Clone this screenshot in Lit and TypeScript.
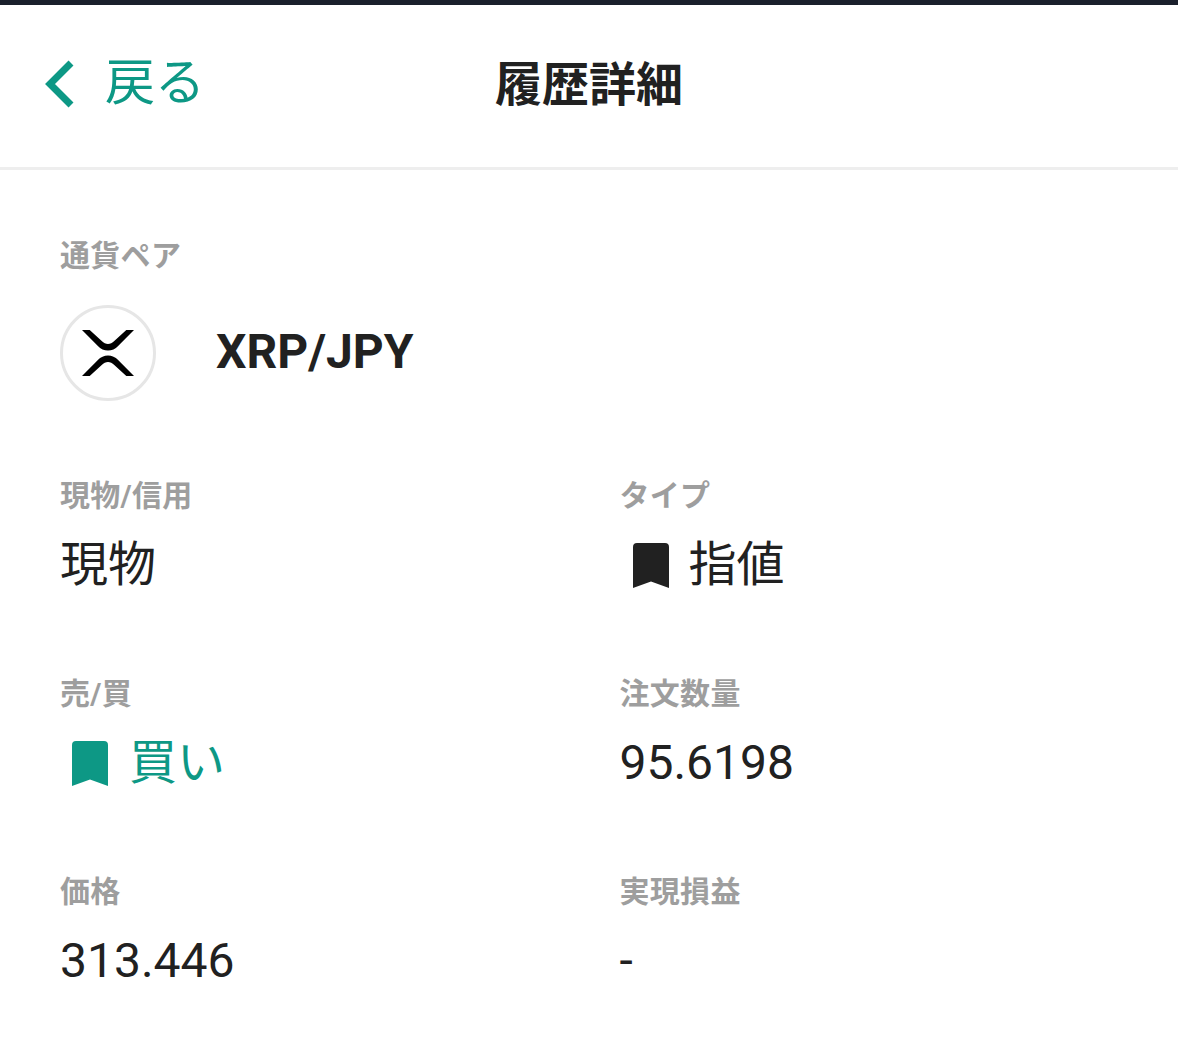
import { css, html, LitElement } from 'lit';
import { customElement } from 'lit/decorators.js';

const bookmark = (cls: string) => html`
  <svg class="mark ${cls}" viewBox="0 0 36 45" aria-hidden="true">
    <path d="M0 45V4a4 4 0 0 1 4-4h28a4 4 0 0 1 4 4v41l-18-6.500z" fill="currentColor"></path>
  </svg>
`;

@customElement('app-root')
export class AppRoot extends LitElement {
  static override styles = css`
    :host {
      display: block;
      min-height: 1063px;
      background: #fff;
      color: #212121;
      font-family: Roboto, 'Noto Sans CJK JP', sans-serif;
      border-top: 5px solid #1a202c;
      box-sizing: border-box;
    }
    .header {
      display: grid;
      grid-template-columns: 1fr auto 1fr;
      align-items: center;
      height: 165px;
      padding: 0 42px 3px;
      box-sizing: border-box;
      border-bottom: 3px solid #eeeeee;
    }
    .back {
      display: flex;
      align-items: center;
      gap: 29px;
      color: #0d9885;
      font-size: 50px;
      line-height: 1;
      margin-bottom: 4px;
    }
    .back svg {
      width: 34px;
      height: 50px;
      position: relative;
      top: 1px;
    }
    .title {
      font-size: 47px;
      font-weight: 700;
      line-height: 1;
    }
    .content {
      padding: 68px 60px 0;
    }
    .label {
      font-size: 30px;
      font-weight: 700;
      line-height: 36px;
      letter-spacing: 0.300px;
      color: #9e9e9e;
    }
    .pair {
      display: flex;
      align-items: center;
      gap: 60px;
      margin-top: 31px;
      margin-bottom: 77px;
    }
    .coin {
      width: 96px;
      height: 96px;
      flex: none;
      border: 3px solid #e6e6e6;
      border-radius: 50%;
      box-sizing: border-box;
      display: flex;
      align-items: center;
      justify-content: center;
    }
    .coin svg {
      width: 52px;
      height: 46px;
    }
    .pair-name {
      font-size: 48px;
      font-weight: 700;
      line-height: 56px;
      margin-bottom: 2px;
    }
    .grid {
      display: grid;
      grid-template-columns: 559.500px 1fr;
      grid-auto-rows: 198px;
    }
    .value {
      display: flex;
      align-items: center;
      gap: 20px;
      font-size: 48px;
      line-height: 56px;
      margin-top: 23px;
    }
    .value.buy {
      color: #0d9885;
      gap: 21px;
    }
    .mark {
      width: 36px;
      height: 45px;
      flex: none;
    }
    .mark.sell {
      margin-left: 13px;
    }
    .mark.green {
      margin-left: 12px;
    }
  `;

  override render() {
    return html`
      <div class="header">
        <div class="back">
          <svg viewBox="0 0 34 50" aria-hidden="true">
            <path d="M29 4 8 25l21 21" fill="none" stroke="currentColor" stroke-width="7"></path>
          </svg>
          <span>戻る</span>
        </div>
        <div class="title">履歴詳細</div>
        <div></div>
      </div>
      <div class="content">
        <div class="label">通貨ペア</div>
        <div class="pair">
          <div class="coin">
            <svg viewBox="0 0 54 46" preserveAspectRatio="none" aria-hidden="true">
              <path
                d="M0 0h8l12.500 11c4 4 9 4 13 0L46 0h8L37.500 16c-5.500 6-15.500 6-21 0zM0 46h8l12.500-11c4-4 9-4 13 0L46 46h8L37.500 30c-5.500-6-15.500-6-21 0z"
                fill="#000"
              ></path>
            </svg>
          </div>
          <div class="pair-name">XRP/JPY</div>
        </div>
        <div class="grid">
          <div>
            <div class="label">現物/信用</div>
            <div class="value">現物</div>
          </div>
          <div>
            <div class="label">タイプ</div>
            <div class="value">${bookmark('sell')}指値</div>
          </div>
          <div>
            <div class="label">売/買</div>
            <div class="value buy">${bookmark('green')}買い</div>
          </div>
          <div>
            <div class="label">注文数量</div>
            <div class="value">95.6198</div>
          </div>
          <div>
            <div class="label">価格</div>
            <div class="value">313.446</div>
          </div>
          <div>
            <div class="label">実現損益</div>
            <div class="value">-</div>
          </div>
        </div>
      </div>
    `;
  }
}
